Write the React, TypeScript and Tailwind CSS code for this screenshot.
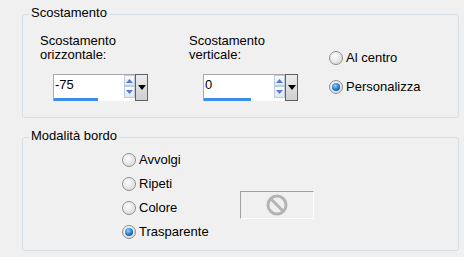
import React from 'react'

const font = { fontFamily: '"Liberation Sans", Arial, sans-serif' }

function Radio({ label, checked }: { label: string; checked?: boolean }) {
  return (
    <div className="flex h-4 items-center gap-[3px]">
      <span className="flex h-[14px] w-[14px] items-center justify-center rounded-full border border-[#8f8f8f] bg-[radial-gradient(circle_at_40%_35%,#fdfdfd,#d2d2d2)]">
        {checked && (
          <span className="h-[8px] w-[8px] rounded-full bg-[radial-gradient(circle_at_40%_35%,#8fd4ff,#1a78c8_55%,#0a3f78)]" />
        )}
      </span>
      <span className="text-[13px] leading-[14px] text-black">{label}</span>
    </div>
  )
}

function SpinField({ value, bar }: { value: string; bar: string }) {
  return (
    <div className="flex h-[27px] w-[95px]">
      <div className="flex flex-1 flex-col border border-r-0 border-[#a9a9a9] bg-white">
        <div className="flex flex-1">
          <span className="flex-1 pl-[1px] pt-[3px] text-[13px] leading-[14px] text-black">{value}</span>
          <div className="flex w-[11px] flex-col">
            <span className="flex h-[11px] items-center justify-center border border-[#bccbe0] bg-[linear-gradient(#fbfcfe,#dde6f2)]">
              <svg width="7" height="4" viewBox="0 0 7 4">
                <path d="M0 4 L3.5 0 L7 4 Z" fill="#5a7cc2" />
              </svg>
            </span>
            <span className="flex h-[12px] items-center justify-center border border-[#bccbe0] bg-[linear-gradient(#fbfcfe,#dde6f2)]">
              <svg width="7" height="4" viewBox="0 0 7 4">
                <path d="M0 0 L3.5 4 L7 0 Z" fill="#5a7cc2" />
              </svg>
            </span>
          </div>
        </div>
        <div className="h-[3px] bg-white">
          <div className={`h-[3px] bg-[#3c8de6] ${bar}`} />
        </div>
      </div>
      <div className="flex w-[13px] items-center justify-center border border-[#606060] bg-[linear-gradient(#ececec,#cfcfcf)]">
        <svg width="8" height="5" viewBox="0 0 8 5">
          <path d="M0 0 L8 0 L4 5 Z" fill="#000" />
        </svg>
      </div>
    </div>
  )
}

function Group({ title, className, children }: { title: string; className: string; children: React.ReactNode }) {
  return (
    <div className={`relative ml-[22px] w-[437px] rounded-[3px] border border-[#d5dfe5] ${className}`}>
      <span className="absolute -top-[9px] left-[6px] bg-[#f0f0f0] px-[2px] text-[13px] leading-[14px] text-black">
        {title}
      </span>
      {children}
    </div>
  )
}

export default function App() {
  return (
    <div className="h-[257px] w-[464px] overflow-hidden bg-[#f0f0f0] pt-[14px]" style={font}>
      <Group title="Scostamento" className="h-[104px]">
        <div className="flex pl-[17px] pt-[19px]">
          <div className="w-[149px]">
            <div className="text-[13px] leading-[14px] text-black">
              Scostamento
              <br />
              orizzontale:
            </div>
            <div className="ml-[13px] mt-[12px]">
              <SpinField value="-75" bar="w-[44px]" />
            </div>
          </div>
          <div className="w-[140px]">
            <div className="text-[13px] leading-[14px] text-black">
              Scostamento
              <br />
              verticale:
            </div>
            <div className="ml-[14px] mt-[12px]">
              <SpinField value="0" bar="w-[47px]" />
            </div>
          </div>
          <div className="flex flex-col gap-[13px] pt-[16px]">
            <Radio label="Al centro" />
            <Radio label="Personalizza" checked />
          </div>
        </div>
      </Group>
      <Group title="Modalità bordo" className="mt-[19px] h-[114px]">
        <div className="flex pl-[99px] pt-[14px]">
          <div className="flex w-[118px] flex-col gap-[8px]">
            <Radio label="Avvolgi" />
            <Radio label="Ripeti" />
            <Radio label="Colore" />
            <Radio label="Trasparente" checked />
          </div>
          <div className="mt-[39px] flex h-[28px] w-[74px] items-center justify-center border border-b-white border-l-[#a0a0a0] border-r-white border-t-[#a0a0a0]">
            <svg width="22" height="22" viewBox="0 0 22 22">
              <circle cx="11" cy="11" r="9" fill="none" stroke="#b4b4b4" strokeWidth="3" />
              <path d="M4.8 4.8 L17.2 17.2" stroke="#b4b4b4" strokeWidth="3" />
            </svg>
          </div>
        </div>
      </Group>
    </div>
  )
}
